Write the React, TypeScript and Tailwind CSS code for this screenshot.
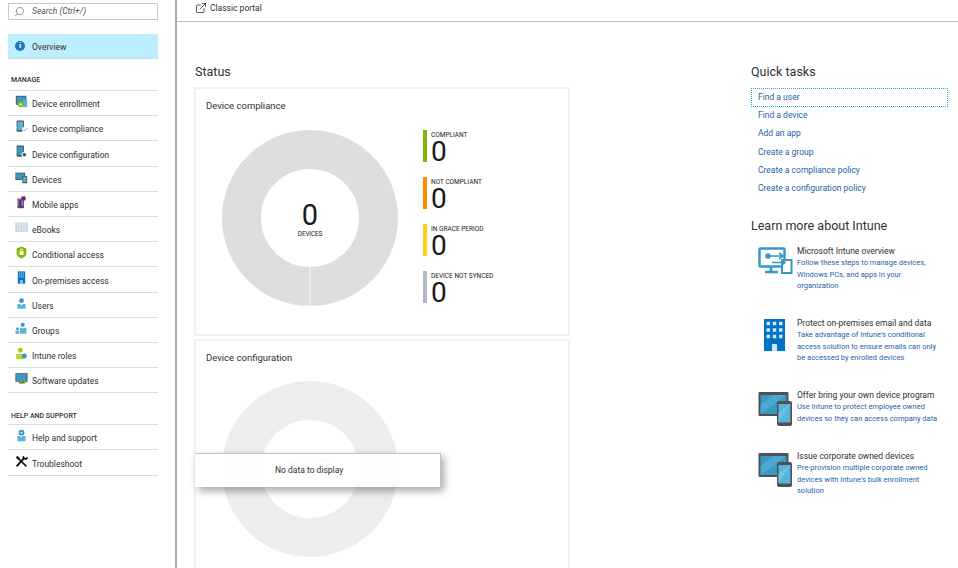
import type { ReactNode } from "react"
import { ExternalLink, Search } from "lucide-react"

const font = "font-['Roboto',sans-serif]"

const Tablet = () => (
  <svg width="16" height="16" viewBox="0 0 16 16">
    <rect x="0.5" y="2" width="12" height="9" fill="#505050" />
    <rect x="1.5" y="3" width="10" height="7" fill="#3999c6" />
    <rect x="9" y="6" width="6" height="9" rx="0.5" fill="#505050" />
    <rect x="10" y="7" width="4" height="6.5" fill="#59b4d9" />
  </svg>
)

const navIcons: Record<string, ReactNode> = {
  enrollment: (
    <svg width="16" height="16" viewBox="0 0 16 16">
      <rect x="1" y="1" width="13" height="11" fill="#505050" />
      <rect x="2" y="2" width="11" height="9" fill="#3999c6" />
      <rect x="10" y="6" width="5" height="9" fill="#59b4d9" />
      <circle cx="7" cy="11.5" r="3.5" fill="#7fba00" />
      <path d="M7 9.700v3.600M5.200 11.500h3.600" stroke="#fff" strokeWidth="1" />
    </svg>
  ),
  compliance: (
    <svg width="16" height="16" viewBox="0 0 16 16">
      <rect x="2" y="0.500" width="9" height="14" rx="1" fill="#505050" />
      <rect x="3" y="2" width="7" height="10.500" fill="#59b4d9" />
      <rect x="9" y="9" width="7" height="7" fill="#fff" />
      <path d="M10 12l1.500 1.500L15 10" stroke="#59b4d9" strokeWidth="1.200" fill="none" />
    </svg>
  ),
  configuration: (
    <svg width="16" height="16" viewBox="0 0 16 16">
      <rect x="2" y="0.500" width="9" height="14" rx="1" fill="#505050" />
      <rect x="3" y="2" width="7" height="10.500" fill="#3999c6" />
      <circle cx="11.500" cy="12" r="3.500" fill="#fff" />
      <circle cx="11.500" cy="12" r="2.200" fill="#505050" />
    </svg>
  ),
  devices: <Tablet />,
  apps: (
    <svg width="16" height="16" viewBox="0 0 16 16">
      <rect x="3" y="3" width="8" height="12" rx="1" fill="#505050" />
      <rect x="4" y="4" width="6" height="8" fill="#a67cc5" />
      <rect x="8" y="0.500" width="5" height="5" fill="#68217a" />
      <rect x="5" y="5" width="3" height="7" fill="#68217a" />
    </svg>
  ),
  ebooks: (
    <svg width="16" height="16" viewBox="0 0 16 16">
      <rect x="0.500" y="2" width="15" height="11" fill="#a0cfe8" />
      <rect x="2" y="3" width="5.500" height="8.500" fill="#f2f2f2" />
      <rect x="8.500" y="3" width="5.500" height="8.500" fill="#f2f2f2" />
      <path d="M3 5h3.500M3 7h3.500M3 9h3.500M9.500 5H13M9.500 7H13M9.500 9H13" stroke="#b0b0b0" strokeWidth="0.700" />
    </svg>
  ),
  conditional: (
    <svg width="16" height="16" viewBox="0 0 16 16">
      <path d="M8 0.500l6 2.500v6c0 3-3 5.500-6 6.500-3-1-6-3.500-6-6.500V3z" fill="#7fba00" />
      <rect x="5.500" y="6.500" width="5" height="4.500" fill="#fff" />
      <path d="M6.500 6.500V5a1.500 1.500 0 013 0v1.500" stroke="#fff" strokeWidth="1" fill="none" />
    </svg>
  ),
  premises: (
    <svg width="16" height="16" viewBox="0 0 16 16">
      <rect x="3.500" y="0.500" width="9" height="15" fill="#0072c6" />
      <path d="M5 2.500h6M5 5h6M5 7.500h6" stroke="#a5d4f0" strokeWidth="1.300" strokeDasharray="1.500 0.750" />
      <rect x="6.500" y="11" width="3" height="4.500" fill="#a5d4f0" />
    </svg>
  ),
  users: (
    <svg width="16" height="16" viewBox="0 0 16 16">
      <circle cx="8" cy="4.500" r="3" fill="#3999c6" />
      <path d="M3 8.500h3.500l1.500 2 1.500-2H13v6H3z" fill="#59b4d9" />
    </svg>
  ),
  groups: (
    <svg width="16" height="16" viewBox="0 0 16 16">
      <circle cx="9.500" cy="3.500" r="2.500" fill="#3999c6" />
      <path d="M6 7h2.500l1 1.500 1-1.500H14v7.500H6z" fill="#59b4d9" />
      <circle cx="3" cy="8.500" r="1.700" fill="#3999c6" />
      <rect x="0.500" y="10.800" width="4.500" height="3.700" fill="#59b4d9" />
    </svg>
  ),
  roles: (
    <svg width="16" height="16" viewBox="0 0 16 16">
      <circle cx="6.500" cy="4" r="3" fill="#a5ce00" />
      <path d="M1.500 8.500h10v6.500h-10z" fill="#b8d432" />
      <circle cx="11.500" cy="11" r="3" fill="#3999c6" />
    </svg>
  ),
  updates: (
    <svg width="16" height="16" viewBox="0 0 16 16">
      <rect x="0.500" y="1.500" width="15" height="10.500" fill="#505050" />
      <rect x="1.500" y="2.500" width="13" height="8.500" fill="#3999c6" />
      <rect x="5" y="12" width="6" height="2" fill="#505050" />
      <path d="M8 15v-4l-1.500 1.500M11.500 9v4.500l1.500-1.500" stroke="#7fba00" strokeWidth="1.400" fill="none" />
    </svg>
  ),
  help: (
    <svg width="16" height="16" viewBox="0 0 16 16">
      <circle cx="8" cy="4.500" r="3.500" fill="#3999c6" />
      <path d="M7 3.500h2v2H7z" fill="#fff" />
      <path d="M3 8.500h3.500l1.500 2 1.500-2H13v6.500H3z" fill="#59b4d9" />
    </svg>
  ),
  troubleshoot: (
    <svg width="16" height="16" viewBox="0 0 16 16">
      <path d="M2 14L11 4" stroke="#111" strokeWidth="2.400" />
      <path d="M10 1.500l1 2.500 2.500 1 2-2" stroke="#111" strokeWidth="2" fill="none" />
      <path d="M14 14L4 4" stroke="#111" strokeWidth="2" />
      <path d="M1 3l2-2 3 3-2 2z" fill="#111" />
    </svg>
  ),
}

const manageItems = [
  { label: "Device enrollment", icon: "enrollment" },
  { label: "Device compliance", icon: "compliance" },
  { label: "Device configuration", icon: "configuration" },
  { label: "Devices", icon: "devices" },
  { label: "Mobile apps", icon: "apps" },
  { label: "eBooks", icon: "ebooks" },
  { label: "Conditional access", icon: "conditional" },
  { label: "On-premises access", icon: "premises" },
  { label: "Users", icon: "users" },
  { label: "Groups", icon: "groups" },
  { label: "Intune roles", icon: "roles" },
  { label: "Software updates", icon: "updates" },
]

const helpItems = [
  { label: "Help and support", icon: "help" },
  { label: "Troubleshoot", icon: "troubleshoot" },
]

const legend = [
  { label: "COMPLIANT", color: "bg-[#7fba00]" },
  { label: "NOT COMPLIANT", color: "bg-[#ff8c00]" },
  { label: "IN GRACE PERIOD", color: "bg-[#fcd116]" },
  { label: "DEVICE NOT SYNCED", color: "bg-[#b4bac5]" },
]

const quickTasks = [
  "Find a device",
  "Add an app",
  "Create a group",
  "Create a compliance policy",
  "Create a configuration policy",
]

const Monitor = () => (
  <svg width="36" height="34" viewBox="0 0 36 34">
    <rect x="1.500" y="1.500" width="25" height="18" rx="1" fill="none" stroke="#3999c6" strokeWidth="2.500" />
    <path d="M13 20v4M7 25h13" stroke="#3999c6" strokeWidth="2.500" />
    <circle cx="10" cy="9" r="2.800" fill="#3999c6" />
    <path d="M12 9h13M21 6l4 3-4 3" stroke="#3999c6" strokeWidth="1.600" fill="none" />
    <rect x="24" y="13" width="9.500" height="13" fill="#fff" stroke="#3999c6" strokeWidth="2" />
    <path d="M14 15.500h13M23.500 12.500l3.500 3-3.500 3" stroke="#3999c6" strokeWidth="1.600" fill="none" />
  </svg>
)

const Building = () => (
  <svg width="36" height="34" viewBox="0 0 36 34">
    <rect x="6" y="0" width="21" height="32" fill="#0072c6" />
    <path d="M8.500 4.500h16M8.500 11h16M8.500 17.500h16" stroke="#cfe8f8" strokeWidth="3.500" strokeDasharray="3.500 2.750" />
    <rect x="14" y="25" width="5" height="7" fill="#cfe8f8" />
  </svg>
)

const TabletLarge = () => (
  <svg width="36" height="36" viewBox="0 0 36 36">
    <rect x="0.500" y="1" width="30" height="24" rx="1" fill="#505050" />
    <rect x="2.500" y="4" width="26" height="19" fill="#3999c6" />
    <path d="M2.500 23V14l13-10h13z" fill="#59b4d9" opacity="0.600" />
    <rect x="19" y="10" width="15" height="25" rx="2" fill="#505050" />
    <rect x="20.500" y="13" width="12" height="18.500" fill="#59b4d9" />
    <path d="M20.500 31.500V22l12-9z" fill="#7fcdee" opacity="0.600" />
  </svg>
)

const learnMore = [
  {
    title: "Microsoft Intune overview",
    body: ["Follow these steps to manage devices,", "Windows PCs, and apps in your", "organization"],
    icon: <Monitor />,
    iconOffset: "mt-[2px]",
    height: "h-[72px]",
  },
  {
    title: "Protect on-premises email and data",
    body: ["Take advantage of Intune's conditional", "access solution to ensure emails can only", "be accessed by enrolled devices"],
    icon: <Building />,
    iconOffset: "-mt-[1px]",
    height: "h-[72px]",
  },
  {
    title: "Offer bring your own device program",
    body: ["Use Intune to protect employee owned", "devices so they can access company data"],
    icon: <TabletLarge />,
    iconOffset: "-mt-[2px]",
    height: "h-[61px]",
  },
  {
    title: "Issue corporate owned devices",
    body: ["Pre-provision multiple corporate owned", "devices with Intune's bulk enrollment", "solution"],
    icon: <TabletLarge />,
    iconOffset: "-mt-[2px]",
    height: "h-[50px]",
  },
]

function Donut({ id, fill, stripe, seam }: { id: string; fill: string; stripe: string; seam?: boolean }) {
  return (
    <svg width="176" height="176" viewBox="0 0 176 176" className="block">
      <defs>
        <pattern id={id} width="3" height="3" patternUnits="userSpaceOnUse" patternTransform="rotate(-45)">
          <rect width="3" height="3" fill={fill} />
          <rect width="3" height="1" fill={stripe} />
        </pattern>
      </defs>
      <circle cx="88" cy="88" r="68.500" fill="none" stroke={`url(#${id})`} strokeWidth="39" />
      {seam && <path d="M88 137v39" stroke="#fff" strokeWidth="0.800" />}
    </svg>
  )
}

function NavRow({ label, icon }: { label: string; icon: string }) {
  return (
    <div className="flex h-[25.2px] items-center border-b border-[#dcdcdc] pl-[7px] pt-[3px] text-[8.5px] text-[#303030]">
      <span className="flex w-[17px] shrink-0 -translate-y-[3px] [&>svg]:h-[13px] [&>svg]:w-[13px]">{navIcons[icon]}</span>
      {label}
    </div>
  )
}

export default function App() {
  return (
    <div className={`${font} flex h-[568px] w-[958px] overflow-hidden bg-white`}>
      {/* Left blade menu */}
      <aside className="h-full w-[177px] shrink-0 border-r-2 border-[#a8a8a8] pl-[8px] pr-[17px] pt-[3px]">
        <div className="flex h-[17px] items-center border border-[#c8c8c8] pl-[5px] text-[8.5px] italic text-[#555]">
          <Search size={11} strokeWidth={1.200} className="mr-[7px] -scale-x-100 text-[#555]" />
          Search (Ctrl+/)
        </div>
        <div className="mt-[14px] flex h-[25px] items-center border-b border-[#c8dfe6] bg-[#bdeefd] pl-[7px] pt-[2px] text-[8.5px] text-[#303030]">
          <span className="mr-[7px] flex h-[10px] w-[10px] -translate-y-px items-center justify-center rounded-full bg-[#1f77b4] text-[8px] font-bold text-white">
            i
          </span>
          Overview
        </div>
        <div className="mt-[16px] h-[15px] pl-[3px] text-[7px] font-medium leading-[10px] text-[#303030]">MANAGE</div>
        <div className="border-t border-[#dcdcdc]">
          {manageItems.map((item) => (
            <NavRow key={item.label} label={item.label} icon={item.icon} />
          ))}
        </div>
        <div className="mt-[17px] h-[14px] pl-[3px] pt-[1px] text-[7px] font-medium leading-[10px] text-[#303030]">
          HELP AND SUPPORT
        </div>
        <div className="border-t border-[#dcdcdc]">
          {helpItems.map((item) => (
            <NavRow key={item.label} label={item.label} icon={item.icon} />
          ))}
        </div>
      </aside>

      <main className="min-w-0 flex-1">
        <div className="flex h-[22px] items-start border-b border-[#bdbdbd] pl-[18px] pt-[2px] text-[8.5px] leading-[13px] text-[#303030]">
          <ExternalLink size={12} strokeWidth={1.500} className="mr-[3px] text-[#222]" />
          Classic portal
        </div>

        <div className="flex pl-[18px]">
          {/* Status column */}
          <section className="w-[375px] shrink-0">
            <h2 className="mt-[41px] h-[24px] text-[12.5px] leading-[17px] text-[#303030]">Status</h2>

            <div className="-ml-px flex h-[249px] border-2 border-[#f0f0f0] pl-[10px] pt-[10px]">
              <div className="w-[217px] shrink-0">
                <div className="text-[9.5px] leading-[14px] text-[#303030]">Device compliance</div>
                <div className="relative ml-[16px] mt-[17px] h-[176px] w-[176px]">
                  <Donut id="hatch-a" fill="#dcdcdc" stripe="#e0e0e0" seam />
                  <div className="absolute inset-x-0 top-[70px] flex flex-col items-center text-[#1a1a1a]">
                    <span className="text-[29px] leading-[30px]">0</span>
                    <span className="text-[6.500px] leading-[8px] tracking-[-0.2px]">DEVICES</span>
                  </div>
                </div>
              </div>
              <div className="-mt-px flex flex-col gap-[15px] pt-[32px]">
                {legend.map((item) => (
                  <div key={item.label} className="flex h-[32px]">
                    <span className={`${item.color} mr-[4px] h-[32px] w-[4px]`} />
                    <div className="pt-[1px] text-[#1a1a1a]">
                      <div className="text-[6.500px] leading-[9px]">{item.label}</div>
                      <div className="text-[28px] leading-[24px]">0</div>
                    </div>
                  </div>
                ))}
              </div>
            </div>

            <div className="relative -ml-px mt-[3px] h-[240px] border-2 border-[#f0f0f0] pl-[10px] pt-[10px]">
              <div className="text-[9.5px] leading-[14px] text-[#303030]">Device configuration</div>
              <div className="relative ml-[16px] mt-[16px] h-[176px] w-[176px]">
                <Donut id="hatch-b" fill="#ececec" stripe="#efefef" />
                <span className="absolute inset-x-0 top-[74px] text-center text-[26px] leading-[28px] text-[#999]">100</span>
              </div>
              <div className="absolute -left-[1px] top-[112px] flex h-[34px] w-[246px] items-center border-r border-t border-[#c4c4c4] bg-white/95 pl-[80px] text-[8.500px] text-[#303030] shadow-[3px_4px_8px_rgba(0,0,0,0.35)]">
                No data to display
              </div>
            </div>
          </section>

          {/* Quick tasks and learn more */}
          <section className="ml-[181px] w-[197px] shrink-0">
            <h2 className="mt-[41px] h-[25px] text-[12.5px] leading-[17px] text-[#303030]">Quick tasks</h2>
            <div className="flex h-[18.500px] items-center border border-dotted border-[#2fa8d5] pl-[6px] text-[8.500px] text-[#1f5fa8]">
              Find a user
            </div>
            {quickTasks.map((task) => (
              <div key={task} className="flex h-[18.200px] items-center pl-[7px] text-[8.500px] text-[#1f5fa8]">
                {task}
              </div>
            ))}
            <h2 className="mt-[19.500px] h-[17px] text-[12.5px] leading-[17px] text-[#303030]">Learn more about Intune</h2>
            <div className="mt-[12px]">
              {learnMore.map((item) => (
                <div key={item.title} className={`${item.height} flex`}>
                  <div className={`${item.iconOffset} mt-px w-[46px] shrink-0 pl-[7px]`}>{item.icon}</div>
                  <div className="whitespace-nowrap">
                    <div className="text-[8.500px] leading-[11.500px] text-[#303030]">{item.title}</div>
                    {item.body.map((line) => (
                      <div key={line} className="text-[7.500px] leading-[11.500px] text-[#1f5fa8]">
                        {line}
                      </div>
                    ))}
                  </div>
                </div>
              ))}
            </div>
          </section>
        </div>
      </main>
    </div>
  )
}
